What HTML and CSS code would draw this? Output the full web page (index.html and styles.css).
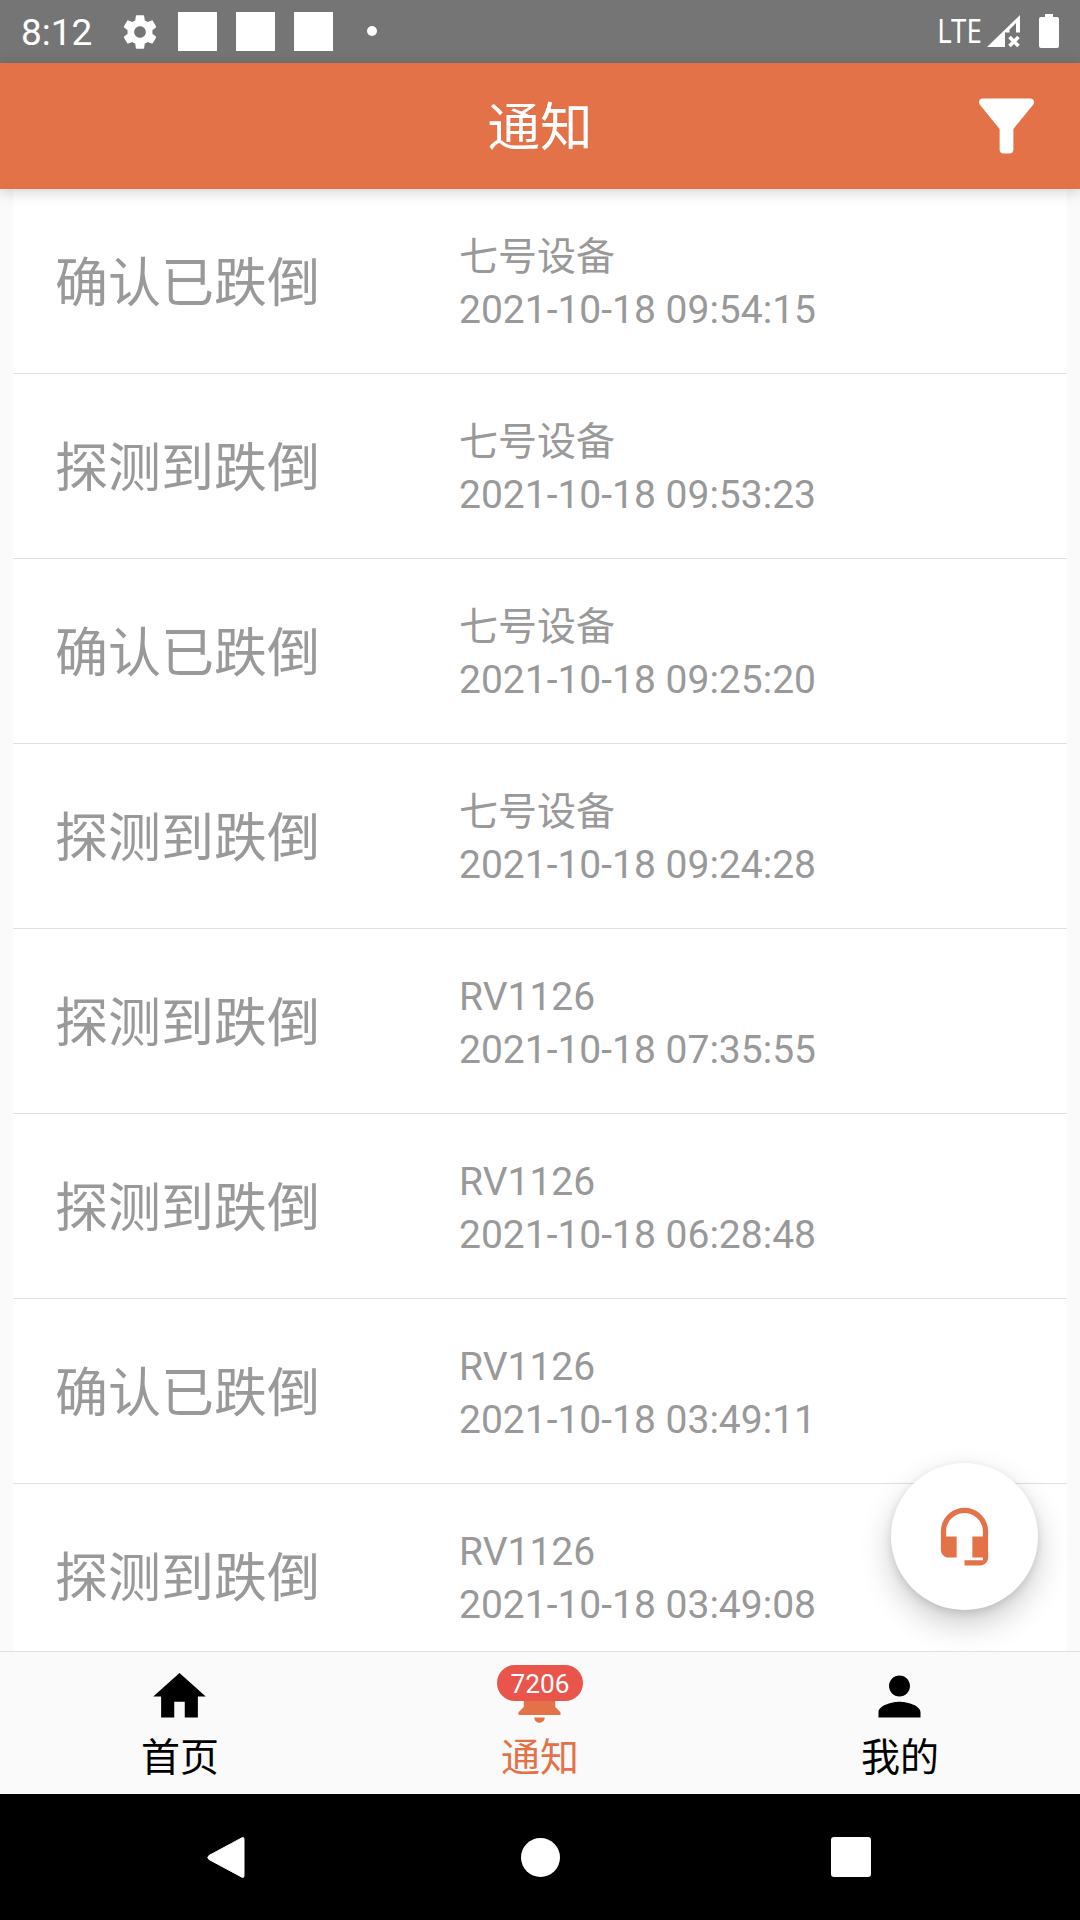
FILE: index.html
```html
<!DOCTYPE html>
<html lang="zh-CN">
<head>
<meta charset="utf-8">
<title>通知</title>
<link rel="stylesheet" href="styles.css">
</head>
<body>
<div class="screen">
  <div class="status">
    <span class="clock">8:12</span>
    <svg class="gear" viewBox="0 0 24 24"><path d="M19.43 12.98c.04-.32.07-.64.07-.98s-.03-.66-.07-.98l2.11-1.65c.19-.15.24-.42.12-.64l-2-3.46c-.12-.22-.39-.3-.61-.22l-2.49 1c-.52-.4-1.08-.73-1.69-.98l-.38-2.65C14.46 2.18 14.25 2 14 2h-4c-.25 0-.46.18-.49.42l-.38 2.65c-.61.25-1.17.59-1.69.98l-2.49-1c-.23-.09-.49 0-.61.22l-2 3.46c-.13.22-.07.49.12.64l2.11 1.65c-.04.32-.07.65-.07.98s.03.66.07.98l-2.11 1.65c-.19.15-.24.42-.12.64l2 3.46c.12.22.39.3.61.22l2.49-1c.52.4 1.08.73 1.69.98l.38 2.65c.03.24.24.42.49.42h4c.25 0 .46-.18.49-.42l.38-2.65c.61-.25 1.17-.59 1.69-.98l2.49 1c.23.09.49 0 .61-.22l2-3.46c.12-.22.07-.49-.12-.64l-2.11-1.65zM12 15.5c-1.93 0-3.5-1.57-3.5-3.5s1.57-3.5 3.5-3.5 3.5 1.57 3.5 3.5-1.57 3.5-3.5 3.5z"/></svg>
    <i class="block"></i><i class="block"></i><i class="block"></i>
    <i class="dot"></i>
    <span class="lte">LTE</span>
    <svg class="signal" viewBox="0 0 33 33"><path fill-rule="evenodd" d="M0 32 33 0V17.500H29V8L22.500 14.500V17.500H18V32Z"/><path d="m22.500 22 9 9m0-9-9 9" fill="none" stroke="#fff" stroke-width="3.600"/></svg>
    <svg class="battery" viewBox="0 0 20 34"><path d="M6 0h8v3h4q2 0 2 2v27q0 2-2 2H2q-2 0-2-2V5q0-2 2-2h4z"/></svg>
  </div>

  <div class="appbar">
    <span class="spacer"></span>
    <h1 class="title">通知</h1>
    <div class="action"><svg class="filter" viewBox="0 0 56 56"><path d="M4 0H52Q56 0 56 4L55.300 6 35 31V52Q35 56 31 56H25Q21 56 21 52V31L.7 6 0 4Q0 0 4 0Z"/></svg></div>
  </div>

  <div class="list">
    <div class="row"><div class="event">确认已跌倒</div><div class="detail"><div>七号设备</div><div>2021-10-18 09:54:15</div></div></div>
    <div class="row"><div class="event">探测到跌倒</div><div class="detail"><div>七号设备</div><div>2021-10-18 09:53:23</div></div></div>
    <div class="row"><div class="event">确认已跌倒</div><div class="detail"><div>七号设备</div><div>2021-10-18 09:25:20</div></div></div>
    <div class="row"><div class="event">探测到跌倒</div><div class="detail"><div>七号设备</div><div>2021-10-18 09:24:28</div></div></div>
    <div class="row"><div class="event">探测到跌倒</div><div class="detail"><div>RV1126</div><div>2021-10-18 07:35:55</div></div></div>
    <div class="row"><div class="event">探测到跌倒</div><div class="detail"><div>RV1126</div><div>2021-10-18 06:28:48</div></div></div>
    <div class="row"><div class="event">确认已跌倒</div><div class="detail"><div>RV1126</div><div>2021-10-18 03:49:11</div></div></div>
    <div class="row"><div class="event">探测到跌倒</div><div class="detail"><div>RV1126</div><div>2021-10-18 03:49:08</div></div></div>
    <div class="fab"><svg class="icon" viewBox="0 0 24 24"><path d="M12 1c-4.970 0-9 4.030-9 9v7c0 1.660 1.340 3 3 3h3v-8H5v-2c0-3.870 3.130-7 7-7s7 3.130 7 7v2h-4v8h4v1h-7v2h6c1.660 0 3-1.340 3-3V10c0-4.970-4.030-9-9-9z"/></svg></div>
  </div>

  <div class="tabs">
    <div class="tab"><svg class="icon" viewBox="0 0 24 24"><path d="M10 20v-6h4v6h5v-8h3L12 3 2 12h3v8z"/></svg><span>首页</span></div>
    <div class="tab active"><svg class="icon" viewBox="0 0 24 24"><path d="M12 22c1.100 0 2-.9 2-2h-4c0 1.100.89 2 2 2zm6-6v-5c0-3.070-1.640-5.640-4.500-6.320V4c0-.83-.67-1.500-1.500-1.500s-1.500.67-1.500 1.500v.68C7.630 5.360 6 7.920 6 11v5l-2 2v1h16v-1l-2-2z"/></svg><span>通知</span><b class="badge">7206</b></div>
    <div class="tab"><svg class="icon" viewBox="0 0 24 24"><path d="M12 12c2.210 0 4-1.790 4-4s-1.790-4-4-4-4 1.790-4 4 1.790 4 4 4zm0 2c-2.670 0-8 1.340-8 4v2h16v-2c0-2.660-5.330-4-8-4z"/></svg><span>我的</span></div>
  </div>

  <div class="sysnav">
    <svg class="back" viewBox="0 0 38 43"><path d="M35 1.800 2 19.500Q-.5 21.500 2 23.500L35 41.200Q37 42 37 40V3Q37 1 35 1.800Z" stroke="#fff" stroke-width="1"/></svg>
    <i class="home"></i>
    <i class="recent"></i>
  </div>
</div>
</body>
</html>
```
FILE: styles.css
```css
* { box-sizing: border-box; }
body {
  margin: 0;
  font-family: Roboto, "Noto Sans CJK SC", sans-serif;
}
svg { display: block; flex: none; fill: currentColor; }
.screen {
  width: 1080px;
  height: 1920px;
  display: flex;
  flex-direction: column;
  overflow: hidden;
  background: #fafafa;
}

/* Status bar */
.status {
  flex: none;
  height: 63px;
  padding: 12px 21px 0;
  display: flex;
  align-items: flex-start;
  background: #757575;
  color: #fff;
}
.clock {
  width: 99px;
  font-size: 37px;
  line-height: 42px;
}
.gear { width: 40px; height: 40px; }
.block {
  width: 39px;
  height: 39px;
  margin-left: 19px;
  background: #fff;
}
.gear + .block { margin-left: 18px; }
.dot {
  width: 10px;
  height: 10px;
  margin: 14px 0 0 34px;
  border-radius: 50%;
  background: #fff;
}
.lte {
  margin-left: auto;
  font: 32px/38px "Noto Sans", sans-serif;
  transform: scaleX(.86);
  transform-origin: right;
}
.signal { width: 33px; height: 33px; margin: 3px 0 0 5px; }
.battery { width: 20px; height: 34px; margin: 2px 0 0 19px; }

/* Title bar */
.appbar {
  flex: none;
  position: relative;
  z-index: 1;
  height: 126px;
  display: grid;
  grid-template-columns: 1fr auto 1fr;
  align-items: center;
  background: #e37248;
  color: #fff;
  box-shadow: 0 3px 14px rgba(0, 0, 0, .18);
}
.title {
  margin: 0;
  padding-top: 4px;
  font-size: 52.500px;
  font-weight: 400;
  line-height: 76px;
}
.action { display: flex; justify-content: flex-end; padding-right: 46px; }
.filter { width: 55px; height: 56px; }

/* Notifications */
.list {
  flex: 1;
  min-height: 0;
  position: relative;
  padding: 0 13px;
  overflow: hidden;
}
.row {
  height: 185px;
  padding: 5px 0 0 42px;
  display: flex;
  align-items: center;
  background: #fff;
  border-bottom: 1px solid #e0e0e0;
  color: #999;
}
.event { width: 404px; font-size: 53px; line-height: 76px; }
.detail { font-size: 39px; line-height: 53px; }
.fab {
  position: absolute;
  right: 42px;
  bottom: 41px;
  width: 147px;
  height: 147px;
  border-radius: 50%;
  display: grid;
  place-items: center;
  background: #fff;
  color: #e37248;
  box-shadow: 0 14px 32px rgba(0, 0, 0, .2), 0 3px 8px rgba(0, 0, 0, .12);
}
.icon { width: 63px; height: 63px; }

/* Tab bar */
.tabs {
  flex: none;
  height: 143px;
  display: flex;
  border-top: 1px solid #e0e0e0;
  background: #fafafa;
}
.tab {
  flex: 1;
  position: relative;
  padding-top: 13px;
  display: flex;
  flex-direction: column;
  align-items: center;
  font-size: 39px;
  line-height: 60px;
}
.tab .icon { margin-right: 1px; }
.active { color: #e37248; }
.badge {
  position: absolute;
  top: 13px;
  left: 137px;
  width: 86px;
  height: 36px;
  border-radius: 18px;
  background: #e9554b;
  color: #fff;
  font-size: 26.250px;
  font-weight: 400;
  line-height: 39px;
  text-align: center;
}

/* System navigation */
.sysnav {
  flex: none;
  height: 126px;
  padding: 0 209px 0 207px;
  display: flex;
  align-items: center;
  justify-content: space-between;
  background: #000;
  color: #fff;
}
.back { width: 38px; height: 43px; }
.home { width: 39px; height: 39px; margin-left: 4px; border-radius: 50%; background: #fff; }
.recent { width: 40px; height: 40px; border-radius: 3px; background: #fff; }
```
